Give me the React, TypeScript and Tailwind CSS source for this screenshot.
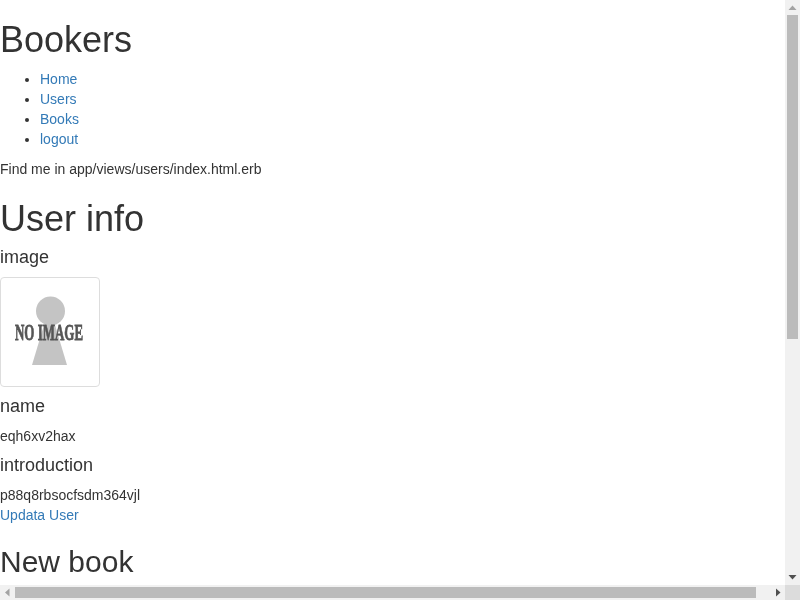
import React from "react";

const NoImage = () => (
  <div className="relative mb-[9px] h-[110px] w-[100px] overflow-hidden rounded border border-[#ddd] bg-white">
    <svg className="absolute inset-0" width="98" height="108" viewBox="0 0 98 108">
      <circle cx="49.5" cy="33" r="14.5" fill="#c4c4c4" />
      <polygon points="43,47 54,47 66,87 31,87" fill="#c4c4c4" />
    </svg>
    <span className="absolute -left-px right-px top-[39px] flex justify-center whitespace-nowrap font-['Liberation_Serif',serif] text-[24px] font-bold leading-[30px] text-[#555] [-webkit-text-stroke:0.8px_#555] [transform:scaleX(0.54)] blur-[0.4px]">
      NO IMAGE
    </span>
  </div>
);

const Arrow = ({ points, fill }: { points: string; fill: string }) => (
  <svg width="15" height="15" viewBox="0 0 15 15" className="block shrink-0">
    <polygon points={points} fill={fill} />
  </svg>
);

export default function App() {
  return (
    <div className="grid h-[600px] w-[800px] grid-cols-[785px_15px] grid-rows-[585px_15px] overflow-hidden bg-white font-['Liberation_Sans',Arial,sans-serif] text-sm leading-5 text-[#333]">
      {/* Page */}
      <div className="overflow-hidden will-change-transform">
        <h1 className="pt-5 pb-[9px] text-4xl leading-10 font-medium">Bookers</h1>
        <ul className="mb-2.5 list-disc pl-10">
          <li><a href="#" className="text-[#337ab7]">Home</a></li>
          <li><a href="#" className="text-[#337ab7]">Users</a></li>
          <li><a href="#" className="text-[#337ab7]">Books</a></li>
          <li><a href="#" className="text-[#337ab7]">logout</a></li>
        </ul>
        <p className="mb-2.5">Find me in app/views/users/index.html.erb</p>

        <h1 className="pt-2.5 pb-2 text-4xl leading-10 font-medium">User info</h1>
        <h4 className="mb-2.5 text-lg leading-5 font-medium">image</h4>
        <NoImage />
        <h4 className="mb-2.5 text-lg leading-5 font-medium">name</h4>
        <p className="mb-[9px]">eqh6xv2hax</p>
        <h4 className="mb-2.5 text-lg leading-5 font-medium">introduction</h4>
        <p>p88q8rbsocfsdm364vjl</p>
        <a href="#" className="block text-[#337ab7]">Updata User</a>

        <h2 className="mt-5 text-3xl leading-[33px] font-medium">New book</h2>
      </div>

      {/* Vertical scrollbar */}
      <div className="flex flex-col bg-[#f1f1f1]">
        <Arrow points="3.5,10 11.5,10 7.5,5.5" fill="#a3a3a3" />
        <div className="flex-1">
          <div className="mx-0.5 h-[324px] bg-[#bbbbbb]" />
        </div>
        <Arrow points="3.5,5 11.5,5 7.5,9.5" fill="#505050" />
      </div>

      {/* Horizontal scrollbar */}
      <div className="flex bg-[#f1f1f1]">
        <Arrow points="9.5,3.5 9.5,11.5 5,7.5" fill="#a3a3a3" />
        <div className="flex-1">
          <div className="my-0.5 h-[11px] w-[741px] bg-[#bbbbbb]" />
        </div>
        <Arrow points="6,3.5 6,11.5 10.5,7.5" fill="#505050" />
      </div>
      <div className="bg-[#dcdcdc]" />
    </div>
  );
}
